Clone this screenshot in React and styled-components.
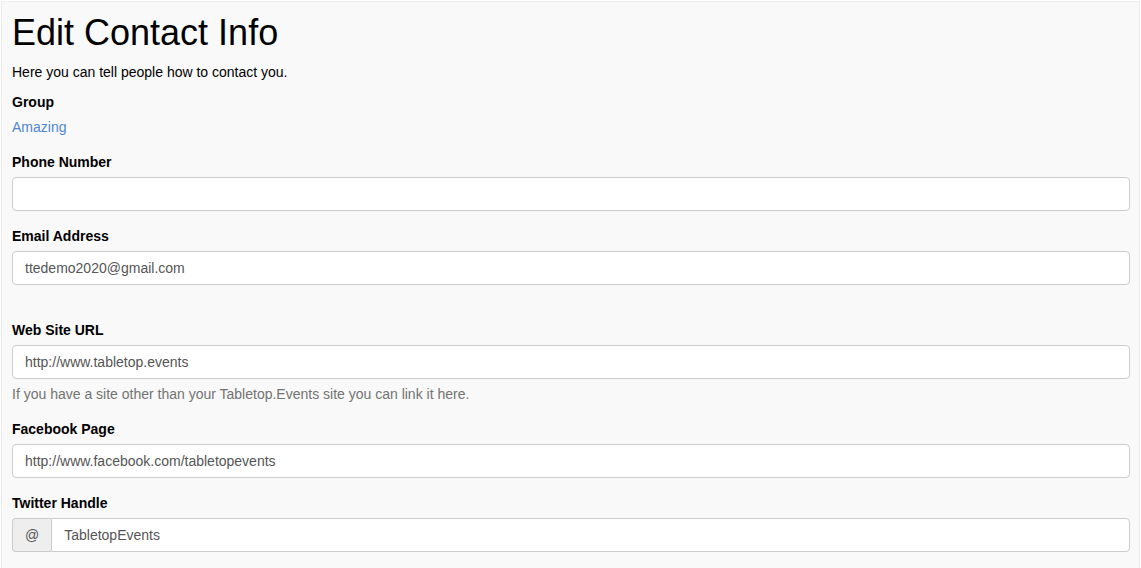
import React from "react";
import styled, { createGlobalStyle } from "styled-components";

const Global = createGlobalStyle`
  html, body { margin: 0; padding: 0; background: #fff; }
  body {
    font-family: "Liberation Sans", Arial, Helvetica, sans-serif;
    font-size: 14px;
    line-height: 20px;
    color: #000;
  }
  * { box-sizing: border-box; }
`;

const Panel = styled.div`
  margin: 1px 1px 0 1px;
  background: #f9f9f9;
  border: 1px solid #ececec;
  border-bottom: none;
  padding: 11px 9px 16px 10px;
  min-height: 567px;
`;

const Title = styled.h1`
  margin: 0 0 9px 0;
  font-size: 36px;
  font-weight: 400;
  line-height: 40px;
`;

const Lead = styled.p`
  margin: 0 0 10px 0;
`;

const Group = styled.div`
  margin-bottom: ${(p) => p.$mb ?? 15}px;
`;

const Label = styled.label`
  display: block;
  font-weight: 700;
  margin-bottom: 5px;
`;

const Link = styled.a`
  color: #4f87cf;
  text-decoration: none;
`;

const Input = styled.input`
  display: block;
  width: 100%;
  min-width: 0;
  height: 34px;
  padding: 6px 12px;
  font-family: inherit;
  font-size: 14px;
  line-height: 20px;
  color: #555;
  background: #fff;
  border: 1px solid #ccc;
  border-radius: ${(p) => (p.$joined ? "0 4px 4px 0" : "4px")};
  outline: none;
`;

const Help = styled.p`
  margin: 5px 0 0 0;
  color: #737373;
`;

const InputGroup = styled.div`
  display: flex;
  width: 100%;
`;

const Addon = styled.span`
  display: flex;
  align-items: center;
  justify-content: center;
  flex: none;
  height: 34px;
  padding: 0 12px;
  color: #555;
  background: #eee;
  border: 1px solid #ccc;
  border-right: none;
  border-radius: 4px 0 0 4px;
`;

export default function App() {
  return (
    <>
      <Global />
      <Panel>
        <Title>Edit Contact Info</Title>
        <Lead>Here you can tell people how to contact you.</Lead>
        <Group>
          <Label>Group</Label>
          <Link href="#">Amazing</Link>
        </Group>
        <Group>
          <Label>Phone Number</Label>
          <Input type="text" defaultValue="" />
        </Group>
        <Group $mb={35}>
          <Label>Email Address</Label>
          <Input type="text" defaultValue="ttedemo2020@gmail.com" />
        </Group>
        <Group $mb={15}>
          <Label>Web Site URL</Label>
          <Input type="text" defaultValue="http://www.tabletop.events" />
          <Help>If you have a site other than your Tabletop.Events site you can link it here.</Help>
        </Group>
        <Group $mb={15}>
          <Label>Facebook Page</Label>
          <Input type="text" defaultValue="http://www.facebook.com/tabletopevents" />
        </Group>
        <Group>
          <Label>Twitter Handle</Label>
          <InputGroup>
            <Addon>@</Addon>
            <Input $joined type="text" defaultValue="TabletopEvents" />
          </InputGroup>
        </Group>
      </Panel>
    </>
  );
}
